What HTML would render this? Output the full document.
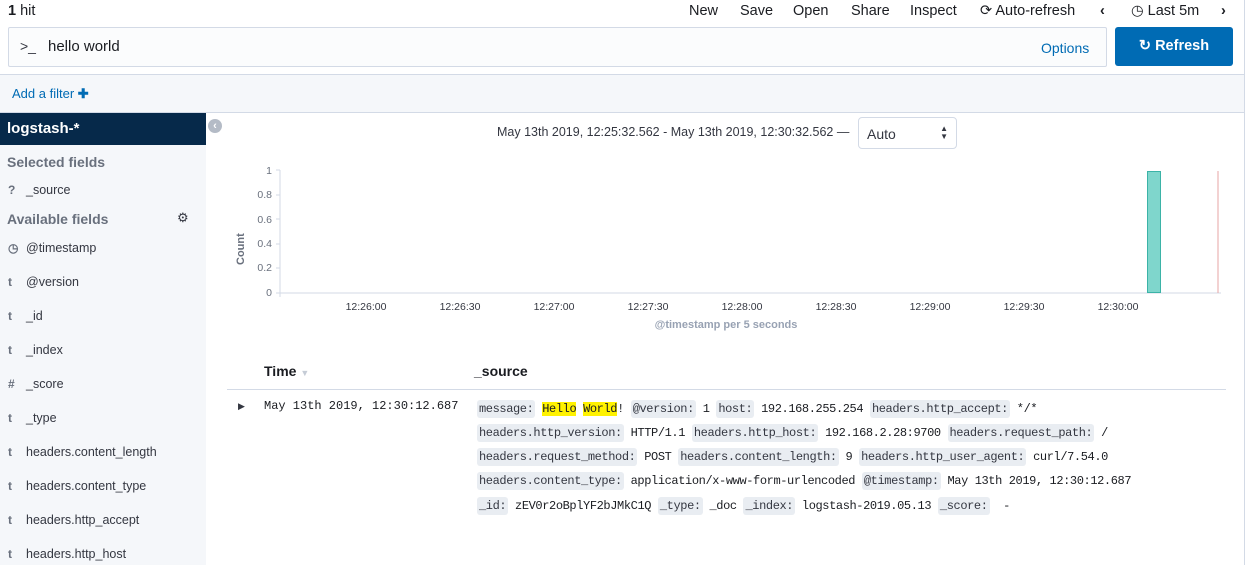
<!DOCTYPE html>
<html><head><meta charset="utf-8"><style>
*{box-sizing:border-box;margin:0;padding:0}
body{width:1249px;height:565px;overflow:hidden;background:#fff;font-family:"Liberation Sans",sans-serif;color:#343741;position:relative;font-size:14px}
.a{position:absolute;white-space:nowrap}
.menu span{position:absolute;top:3px;font-size:14.5px;color:#1a1c21}
.side{position:absolute;left:0;top:113px;width:206px;height:452px;background:#f5f7fa}
.f{position:absolute;left:0;font-size:12.5px;color:#343741}
.f b{display:inline-block;width:26px;padding-left:8px;font-weight:bold;color:#69707d;font-size:12px}
.src{position:absolute;left:477px;font-family:"Liberation Mono",monospace;font-size:12px;letter-spacing:-0.4px;color:#1a1c21;white-space:nowrap}
.src i{font-style:normal;background:#e9edf2;border-radius:3px;padding:2px 2px;color:#343741}
.src em{font-style:normal;background:#fff200}
</style></head><body>
<div class="a" style="left:8px;top:3px;font-size:14.5px;color:#1a1c21"><b>1</b> hit</div>
<div class="menu">
<span style="left:689px">New</span><span style="left:740px">Save</span><span style="left:793px">Open</span><span style="left:851px">Share</span><span style="left:910px">Inspect</span>
<span style="left:980px">⟳ Auto-refresh</span><span style="left:1100px;font-weight:bold">‹</span><span style="left:1131px">◷ Last 5m</span><span style="left:1221px;font-weight:bold">›</span>
</div>
<div class="a" style="left:8px;top:27px;width:1099px;height:40px;background:#fbfcfd;border:1px solid #d3dae6;border-radius:2px"></div>
<div class="a" style="left:20px;top:38px;font-size:14px;color:#343741">&gt;_</div>
<div class="a" style="left:48px;top:38px;font-size:15px;color:#1a1c21">hello world</div>
<div class="a" style="left:1041px;top:40px;font-size:14px;color:#006bb4">Options</div>
<div class="a" style="left:1115px;top:27px;width:118px;height:39px;background:#006bb4;border-radius:3px;color:#fff;font-size:14.5px;font-weight:bold;text-align:center;line-height:39px">↻ Refresh</div>
<div class="a" style="left:0;top:74px;width:1245px;height:39px;background:#f5f7fa;border-top:1px solid #d3dae6;border-bottom:1px solid #d3dae6"></div>
<div class="a" style="left:12px;top:86px;font-size:13px;color:#006bb4">Add a filter <b>✚</b></div>
<div class="a" style="left:1244px;top:0;width:1px;height:565px;background:#d3dae6"></div>
<div class="side"></div>
<div class="a" style="left:0;top:113px;width:206px;height:32px;background:#06294a;color:#fff;font-weight:bold;font-size:15px;line-height:32px;padding-left:7px">logstash-*</div>
<div class="a" style="left:7px;top:154px;font-size:14px;font-weight:bold;color:#69707d">Selected fields</div>
<div class="f" style="top:183px"><b>?</b>_source</div>
<div class="a" style="left:7px;top:211px;font-size:14px;font-weight:bold;color:#69707d">Available fields</div>
<div class="a" style="left:177px;top:210px;font-size:13px;color:#343741">⚙</div>
<div class="f" style="top:241px"><b>◷</b>@timestamp</div>
<div class="f" style="top:275px"><b>t</b>@version</div>
<div class="f" style="top:309px"><b>t</b>_id</div>
<div class="f" style="top:343px"><b>t</b>_index</div>
<div class="f" style="top:377px"><b>#</b>_score</div>
<div class="f" style="top:411px"><b>t</b>_type</div>
<div class="f" style="top:445px"><b>t</b>headers.content_length</div>
<div class="f" style="top:479px"><b>t</b>headers.content_type</div>
<div class="f" style="top:513px"><b>t</b>headers.http_accept</div>
<div class="f" style="top:547px"><b>t</b>headers.http_host</div>
<div class="a" style="left:208px;top:119px;width:14px;height:14px;border-radius:50%;background:#b4bbc6;color:#fff;font-size:11px;line-height:14px;text-align:center;font-weight:bold">‹</div>
<div class="a" style="left:497px;top:125px;font-size:12.5px;color:#343741">May 13th 2019, 12:25:32.562 - May 13th 2019, 12:30:32.562 —</div>
<div class="a" style="left:858px;top:117px;width:99px;height:32px;border:1px solid #d3dae6;border-radius:4px;background:#fff;font-size:14px;padding:8px 0 0 8px">Auto<span style="position:absolute;right:8px;top:7px;font-size:8px;line-height:8px">▲<br>▼</span></div>
<svg class="a" style="left:226px;top:160px" width="1010" height="180">
<g font-family="Liberation Sans" font-size="10.5" fill="#69707d" text-anchor="end">
<text x="46" y="14">1</text><text x="46" y="38">0.8</text><text x="46" y="63">0.6</text><text x="46" y="87">0.4</text><text x="46" y="111">0.2</text><text x="46" y="136">0</text>
</g>
<text transform="translate(18,105) rotate(-90)" font-family="Liberation Sans" font-size="11" font-weight="bold" fill="#69707d">Count</text>
<g stroke="#d3dae6"><line x1="54" y1="10" x2="54" y2="137"/><line x1="54" y1="133" x2="995" y2="133"/>
<line x1="50" y1="10" x2="54" y2="10"/><line x1="50" y1="35" x2="54" y2="35"/><line x1="50" y1="59" x2="54" y2="59"/><line x1="50" y1="84" x2="54" y2="84"/><line x1="50" y1="108" x2="54" y2="108"/><line x1="50" y1="133" x2="54" y2="133"/></g>
<g font-family="Liberation Sans" font-size="10.5" fill="#343741" text-anchor="middle">
<text x="140" y="150">12:26:00</text><text x="234" y="150">12:26:30</text><text x="328" y="150">12:27:00</text><text x="422" y="150">12:27:30</text><text x="516" y="150">12:28:00</text><text x="610" y="150">12:28:30</text><text x="704" y="150">12:29:00</text><text x="798" y="150">12:29:30</text><text x="892" y="150">12:30:00</text>
</g>
<rect x="921.5" y="11.5" width="13" height="121" fill="#7fd6cc" stroke="#3bb3a7"/>
<line x1="992" y1="11" x2="992" y2="133" stroke="#e7a5a5"/>
<text x="500" y="168" text-anchor="middle" font-family="Liberation Sans" font-size="11" font-weight="bold" fill="#98a2b3">@timestamp per 5 seconds</text>
</svg>
<div class="a" style="left:264px;top:363px;font-size:14px;font-weight:bold;color:#1a1c21">Time <span style="color:#c5ccd6;font-size:9px">▼</span></div>
<div class="a" style="left:474px;top:363px;font-size:14px;font-weight:bold;color:#1a1c21">_source</div>
<div class="a" style="left:227px;top:389px;width:999px;height:1px;background:#d3dae6"></div>
<div class="a" style="left:238px;top:401px;font-size:9px;color:#343741">▶</div>
<div class="a" style="left:264px;top:399px;font-family:'Liberation Mono',monospace;font-size:12px;color:#1a1c21">May 13th 2019, 12:30:12.687</div>
<div class="src" style="top:402px"><i>message:</i> <em>Hello</em> <em>World</em>! <i>@version:</i> 1 <i>host:</i> 192.168.255.254 <i>headers.http_accept:</i> */*</div>
<div class="src" style="top:426px"><i>headers.http_version:</i> HTTP/1.1 <i>headers.http_host:</i> 192.168.2.28:9700 <i>headers.request_path:</i> /</div>
<div class="src" style="top:450px"><i>headers.request_method:</i> POST <i>headers.content_length:</i> 9 <i>headers.http_user_agent:</i> curl/7.54.0</div>
<div class="src" style="top:474px"><i>headers.content_type:</i> application/x-www-form-urlencoded <i>@timestamp:</i> May 13th 2019, 12:30:12.687</div>
<div class="src" style="top:499px"><i>_id:</i> zEV0r2oBplYF2bJMkC1Q <i>_type:</i> _doc <i>_index:</i> logstash-2019.05.13 <i>_score:</i> &nbsp;-</div>
</body></html>
